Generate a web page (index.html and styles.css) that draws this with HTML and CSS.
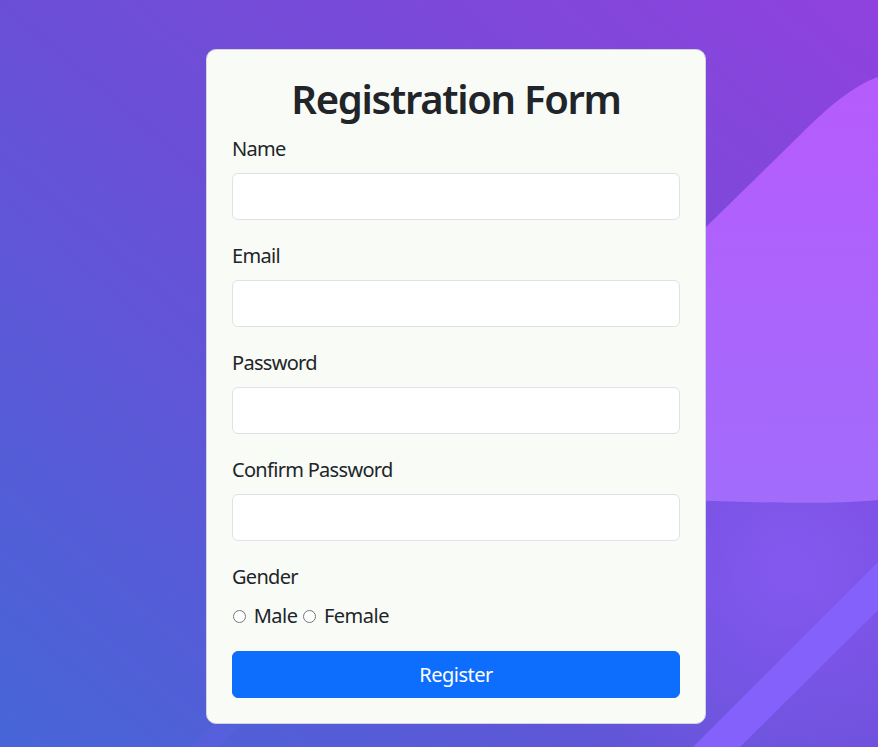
FILE: index.html
```html
<!DOCTYPE html>
<html lang="en">
<head>
<meta charset="utf-8">
<title>Registration Form</title>
<link rel="stylesheet" href="styles.css">
</head>
<body>
<div class="backdrop" aria-hidden="true">
  <svg class="backdrop-art" width="878" height="747" viewBox="0 0 878 747" preserveAspectRatio="none">
    <defs>
      <linearGradient id="bgGrad" x1="0" y1="1" x2="1" y2="0">
        <stop offset="0" stop-color="#4766d8"/>
        <stop offset="0.5" stop-color="#6a4fd6"/>
        <stop offset="1" stop-color="#9042de"/>
      </linearGradient>
      <radialGradient id="glow" cx="790" cy="570" r="260" gradientUnits="userSpaceOnUse">
        <stop offset="0" stop-color="#8a5cf8" stop-opacity="0.75"/>
        <stop offset="1" stop-color="#8a5cf8" stop-opacity="0"/>
      </radialGradient>
      <linearGradient id="blobGrad" x1="0" y1="0" x2="0" y2="1">
        <stop offset="0" stop-color="#b65bfd"/>
        <stop offset="1" stop-color="#a26cfb"/>
      </linearGradient>
    </defs>
    <rect x="0" y="0" width="878" height="747" fill="url(#bgGrad)"/>
    <rect x="0" y="0" width="878" height="747" fill="url(#glow)"/>
    <path d="M600 320 L706 227 L800 135 C 830 105, 855 85, 878 77 L878 500 C 820 505, 760 503, 600 497 Z" fill="url(#blobGrad)"/>
    <path d="M693 747 L878 562 L878 610 L740 747 Z" fill="#8561fb"/>
    <path d="M190 747 L212 725 L240 725 L218 747 Z" fill="#5a5fe0" opacity="0.6"/>
  </svg>
</div>
<main class="page">
  <form class="card">
    <h1 class="title">Registration Form</h1>
    <div class="field">
      <label class="field-label" for="name">Name</label>
      <input class="control" type="text" id="name">
    </div>
    <div class="field">
      <label class="field-label" for="email">Email</label>
      <input class="control" type="email" id="email">
    </div>
    <div class="field">
      <label class="field-label" for="password">Password</label>
      <input class="control" type="password" id="password">
    </div>
    <div class="field">
      <label class="field-label" for="confirm">Confirm Password</label>
      <input class="control" type="password" id="confirm">
    </div>
    <div class="gender">
      <span class="field-label gender-label">Gender</span>
      <div class="radios"><input class="radio" type="radio" name="gender" id="male"> <label for="male">Male</label> <input class="radio" type="radio" name="gender" id="female"> <label for="female">Female</label></div>
    </div>
    <button class="submit" type="button">Register</button>
  </form>
</main>
</body>
</html>
```
FILE: styles.css
```css
html, body {
  margin: 0;
  padding: 0;
}

body {
  width: 878px;
  height: 747px;
  overflow: hidden;
  position: relative;
  font-family: "Noto Sans", "Open Sans", sans-serif;
  color: #212529;
}

.backdrop {
  position: absolute;
  inset: 0;
  z-index: 0;
}

.backdrop-art {
  display: block;
}

.page {
  position: relative;
  z-index: 1;
  padding: 49px 0 0 206px;
}

.card {
  box-sizing: border-box;
  width: 500px;
  margin: 0;
  padding: 25px;
  background: #f9fbf6;
  border: 1px solid #d4d4dc;
  border-radius: 10px;
}

.title {
  margin: 0 0 11px;
  font-size: 40px;
  line-height: 48px;
  font-weight: 600;
  letter-spacing: -1.3px;
  text-align: center;
}

.field {
  margin-bottom: 21px;
}

.field-label {
  display: block;
  font-size: 20px;
  line-height: 30px;
  letter-spacing: -0.7px;
  margin-bottom: 9px;
}

.control {
  display: block;
  box-sizing: border-box;
  width: 100%;
  height: 47px;
  margin: 0;
  padding: 8px 16px;
  font: inherit;
  font-size: 20px;
  background: #ffffff;
  border: 1px solid #dee2e6;
  border-radius: 6px;
}

.gender-label {
  margin-bottom: 9px;
}

.radios {
  font-size: 20px;
  line-height: 30px;
  letter-spacing: -0.5px;
  margin-bottom: 20px;
}

.radio {
  margin: 0 3px 0 1px;
  width: 13px;
  height: 13px;
}

.submit {
  display: block;
  box-sizing: border-box;
  width: 100%;
  height: 47px;
  margin: 0;
  padding: 0;
  font: inherit;
  font-size: 20px;
  letter-spacing: -0.5px;
  color: #ffffff;
  background: #0d6efd;
  border: 1px solid #0d6efd;
  border-radius: 6px;
}
```
